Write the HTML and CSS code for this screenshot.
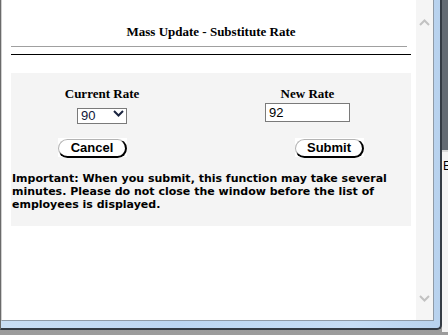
FILE: index.html
```html
<!DOCTYPE html>
<html lang="en">
<head>
  <meta charset="UTF-8">
  <title>Mass Update - Substitute Rate</title>
  <link rel="stylesheet" href="styles.css">
</head>
<body>

  <div class="desk">
    <div class="win">
      <div class="client">

        <div class="page">
          <h1 class="title">Mass Update - Substitute Rate</h1>
          <hr class="rule-gray">
          <hr class="rule-black">

          <div class="panel">
            <div class="fields">
              <div class="field">
                <label class="field-label" for="currentRate">Current Rate</label>
                <div class="field-box">
                  <div class="select-wrap">
                    <select class="rate-select" id="currentRate">
                      <option>90</option>
                    </select>
                    <svg class="select-arrow" width="11" height="7" viewBox="0 0 11 7">
                      <path d="M1 1 L5.5 5.5 L10 1" fill="none" stroke="#1b2540" stroke-width="2"/>
                    </svg>
                  </div>
                </div>
              </div>
              <div class="field field-right">
                <label class="field-label" for="newRate">New Rate</label>
                <div class="field-box">
                  <input class="rate-input" id="newRate" type="text" value="92">
                </div>
              </div>
            </div>

            <div class="actions">
              <span class="pill-box"><button class="pill" id="cancelBtn">Cancel</button></span>
              <span class="pill-box"><button class="pill" id="submitBtn">Submit</button></span>
            </div>

            <p class="note">
              Important: When you submit, this function may take several minutes. Please do not close the window before the list of employees is displayed.
            </p>
          </div>
        </div>

        <!-- scroll bar -->
        <div class="scrollbar">
          <svg width="11" height="7" viewBox="0 0 11 7">
            <path d="M1 6 L5.5 1.5 L10 6" fill="none" stroke="#c2c2c2" stroke-width="2"/>
          </svg>
          <svg width="11" height="7" viewBox="0 0 11 7">
            <path d="M1 1 L5.5 5.5 L10 1" fill="none" stroke="#c2c2c2" stroke-width="2"/>
          </svg>
        </div>

      </div>
    </div>
    <div class="side"><span class="side-letter">E</span></div>
  </div>

</body>
</html>
```

FILE: styles.css
```css
body {
  margin: 0;
  width: 448px;
  height: 335px;
  overflow: hidden;
  background-color: #8c8c8c;
}

.desk {
  display: flex;
  align-items: flex-start;
  height: 335px;
  background: linear-gradient(#8a8a8a, #9c9c9c);
}

/* Window frame */
.win {
  box-sizing: border-box;
  width: 442px;
  height: 330px;
  padding: 0 6px 7px 0;
  border-left: 1px solid #6a6a6a;
  border-right: 2px solid #343b44;
  border-bottom: 2px solid #343b44;
  border-radius: 0 0 5px 0;
  background: linear-gradient(90deg, #c9def4, #bcd6f2 40%, #c6ddf5 80%, #b8d2ee);
}

.client {
  display: flex;
  height: 100%;
  box-sizing: border-box;
  border-left: 1px solid #d0d0d0;
  border-right: 1px solid #8f9aa6;
  border-bottom: 1px solid #8f9aa6;
  background-color: #fff;
}

.page {
  width: 414px;
  box-sizing: border-box;
  padding: 24px 5px 0 9px;
  font-family: "Liberation Serif", "Times New Roman", serif;
  color: #000;
}

.title {
  margin: 0;
  font-size: 13px;
  line-height: 15px;
  font-weight: bold;
  text-align: center;
}

.rule-gray {
  margin: 7px 4px 0 0;
  border: none;
  border-top: 1px solid #a0a0a0;
}

.rule-black {
  margin: 7px 0 0 0;
  border: none;
  border-top: 1px solid #000;
}

/* Grey form panel */
.panel {
  margin-top: 18px;
  padding: 13px 0 15px 1px;
  background-color: #f4f4f4;
}

.fields {
  display: grid;
  grid-template-columns: 180px 1fr;
}

.field {
  display: flex;
  flex-direction: column;
  align-items: center;
}

.field-right {
  padding-left: 12px;
}

.field-label {
  font-size: 13px;
  line-height: 15px;
  font-weight: bold;
}

.field-box {
  display: flex;
  align-items: flex-end;
  height: 21px;
}

.select-wrap {
  position: relative;
  width: 50px;
  height: 16px;
}

.rate-select {
  appearance: none;
  -webkit-appearance: none;
  box-sizing: border-box;
  width: 50px;
  height: 16px;
  margin: 0;
  padding: 0 0 0 3px;
  border: 1px solid #7a7a7a;
  border-radius: 0;
  background-color: #fff;
  font-family: "Liberation Sans", Arial, sans-serif;
  font-size: 13px;
  line-height: 14px;
  color: #10163a;
}

.select-arrow {
  position: absolute;
  right: 3px;
  top: 4px;
}

.rate-input {
  box-sizing: border-box;
  width: 85px;
  height: 19px;
  margin: 0;
  padding: 0 3px;
  border: 1px solid #7a7a7a;
  background-color: #fff;
  font-family: "Liberation Sans", Arial, sans-serif;
  font-size: 13px;
  color: #000;
}

/* Pill buttons */
.actions {
  display: flex;
  gap: 168px;
  margin-top: 16px;
  padding-left: 46px;
}

.pill-box {
  display: block;
  width: 69px;
  height: 19px;
  background-color: #fff;
}

.pill {
  box-sizing: border-box;
  width: 69px;
  height: 19px;
  padding: 0 0 1px 0;
  border: 1px solid #b4b4b4;
  border-right: 2px solid #000;
  border-bottom: 2px solid #000;
  border-radius: 10px;
  background-color: #fff;
  font-family: "Liberation Sans", Arial, sans-serif;
  font-size: 13px;
  font-weight: bold;
  line-height: 15px;
  color: #000;
  cursor: pointer;
}

.note {
  margin: 15px 0 0 0;
  font-family: "DejaVu Sans", Verdana, sans-serif;
  font-size: 11px;
  font-weight: bold;
  line-height: 13px;
  color: #000;
}

/* Scroll bar */
.scrollbar {
  width: 17px;
  display: flex;
  flex-direction: column;
  align-items: center;
  justify-content: space-between;
  padding: 19px 0 18px 0;
  background-color: #f5f5f5;
}

/* Strip of the desktop behind the window */
.side {
  position: relative;
  width: 6px;
  height: 332px;
  background: linear-gradient(#636a72 0, #636a72 150px, #d8d8d8 150px, #d8d8d8 152px, #f3f3f3 152px);
}

.side-letter {
  position: absolute;
  left: 1px;
  top: 160px;
  font-family: "Liberation Sans", Arial, sans-serif;
  font-size: 12px;
  line-height: 12px;
  color: #000;
}
```
